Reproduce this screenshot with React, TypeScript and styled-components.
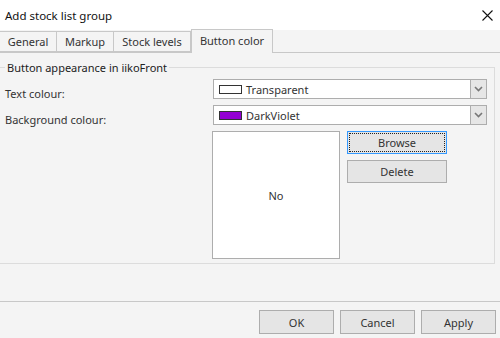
import styled, { createGlobalStyle } from "styled-components";

const GlobalStyle = createGlobalStyle`
  html, body {
    margin: 0;
    padding: 0;
    background: #f4f4f4;
  }
  * {
    box-sizing: border-box;
  }
`;

const Window = styled.div`
  width: 500px;
  height: 338px;
  display: flex;
  flex-direction: column;
  background: #f4f4f4;
  font: normal normal 11px "Noto Sans", "Open Sans", sans-serif;
  color: #333;
  overflow: hidden;
`;

const TitleBar = styled.div`
  height: 30px;
  flex: none;
  background: #fff;
  display: flex;
  align-items: center;
  justify-content: space-between;
  padding: 0 7px 0 5px;
`;

const Title = styled.span`
  font-size: 11.5px;
  color: #111;
`;

const TabStrip = styled.div`
  height: 23px;
  flex: none;
  display: flex;
  align-items: flex-end;
  border-bottom: 1px solid #c8c8c8;
`;

const Tab = styled.div<{ $active?: boolean; $width: number }>`
  width: ${(p) => p.$width}px;
  height: ${(p) => (p.$active ? 24 : 21)}px;
  margin-bottom: ${(p) => (p.$active ? -1 : 0)}px;
  background: #f4f4f4;
  border: 1px solid #c8c8c8;
  border-bottom: ${(p) => (p.$active ? "none" : "1px solid #c8c8c8")};
  margin-left: ${(p) => (p.$active ? 0 : -1)}px;
  display: flex;
  align-items: center;
  justify-content: center;
  padding-bottom: ${(p) => (p.$active ? 3 : 0)}px;
  color: #333;
`;

const TabPage = styled.div`
  flex: 1;
  padding-top: 7px;
`;

const GroupBox = styled.fieldset`
  margin: 0 5px 0 -1px;
  padding: 4px 0 4px 0;
  border: 1px solid #dcdcdc;
  min-width: 0;
`;

const Legend = styled.legend`
  margin-left: 5px;
  padding: 0 2px;
  color: #222;
  line-height: 15px;
`;

const Row = styled.div`
  display: flex;
  align-items: center;
  height: 20px;
  margin-bottom: 6px;
`;

const Label = styled.div`
  width: 213px;
  padding-left: 5px;
  margin-top: 8px;
  color: #333;
`;

const Combo = styled.div`
  width: 274px;
  height: 20px;
  display: flex;
  border: 1px solid #adadad;
  background: #fff;
`;

const ComboValue = styled.div`
  flex: 1;
  display: flex;
  align-items: center;
  padding-left: 5px;
  gap: 4px;
`;

const Swatch = styled.span<{ $color: string }>`
  width: 23px;
  height: 9px;
  border: 1px solid #333;
  background: ${(p) => p.$color};
`;

const ComboButton = styled.div`
  width: 16px;
  background: #e6e6e6;
  border-left: 1px solid #adadad;
  display: flex;
  align-items: center;
  justify-content: center;
`;

const ImageRow = styled.div`
  display: flex;
  padding-left: 212px;
  gap: 7px;
`;

const ImageBox = styled.div`
  width: 128px;
  height: 128px;
  border: 1px solid #adadad;
  background: #fff;
  display: flex;
  align-items: center;
  justify-content: center;
`;

const SideButtons = styled.div`
  display: flex;
  flex-direction: column;
  gap: 6px;
`;

const Button = styled.div<{ $focused?: boolean }>`
  width: 100px;
  height: 23px;
  border: 1px solid ${(p) => (p.$focused ? "#3399ff" : "#adadad")};
  background: #e5e5e5;
  display: flex;
  align-items: center;
  justify-content: center;
  color: #333;
  position: relative;
  &::after {
    content: "";
    display: ${(p) => (p.$focused ? "block" : "none")};
    position: absolute;
    inset: 1px;
    border: 1px dotted #222;
  }
`;

const Footer = styled.div`
  height: 37px;
  flex: none;
  border-top: 1px solid #c8c8c8;
  display: flex;
  justify-content: flex-end;
  align-items: flex-start;
  padding: 8px 4px 0 0;
  gap: 6px;
`;

const FooterButton = styled(Button)`
  width: 75px;
  height: 24px;
`;

function Chevron() {
  return (
    <svg width="9" height="6" viewBox="0 0 9 6">
      <path d="M1 1 L4.5 4.5 L8 1" fill="none" stroke="#777" strokeWidth="1.6" />
    </svg>
  );
}

function CloseIcon() {
  return (
    <svg width="11" height="11" viewBox="0 0 11 11">
      <path d="M0.5 0.5 L10.5 10.5 M10.5 0.5 L0.5 10.5" stroke="#111" strokeWidth="1.1" />
    </svg>
  );
}

const tabs = [
  { name: "General", width: 58 },
  { name: "Markup", width: 58 },
  { name: "Stock levels", width: 78 },
];

export default function App() {
  return (
    <>
      <GlobalStyle />
      <Window>
        <TitleBar>
          <Title>Add stock list group</Title>
          <CloseIcon />
        </TitleBar>
        <TabStrip>
          {tabs.map((t) => (
            <Tab key={t.name} $width={t.width}>
              {t.name}
            </Tab>
          ))}
          <Tab $active $width={82}>
            Button color
          </Tab>
        </TabStrip>
        <TabPage>
          <GroupBox>
            <Legend>Button appearance in iikoFront</Legend>
            <Row>
              <Label>Text colour:</Label>
              <Combo>
                <ComboValue>
                  <Swatch $color="#fff" />
                  Transparent
                </ComboValue>
                <ComboButton>
                  <Chevron />
                </ComboButton>
              </Combo>
            </Row>
            <Row>
              <Label>Background colour:</Label>
              <Combo>
                <ComboValue>
                  <Swatch $color="#9400d3" />
                  DarkViolet
                </ComboValue>
                <ComboButton>
                  <Chevron />
                </ComboButton>
              </Combo>
            </Row>
            <ImageRow>
              <ImageBox>No</ImageBox>
              <SideButtons>
                <Button $focused>Browse</Button>
                <Button>Delete</Button>
              </SideButtons>
            </ImageRow>
          </GroupBox>
        </TabPage>
        <Footer>
          <FooterButton>OK</FooterButton>
          <FooterButton>Cancel</FooterButton>
          <FooterButton>Apply</FooterButton>
        </Footer>
      </Window>
    </>
  );
}
